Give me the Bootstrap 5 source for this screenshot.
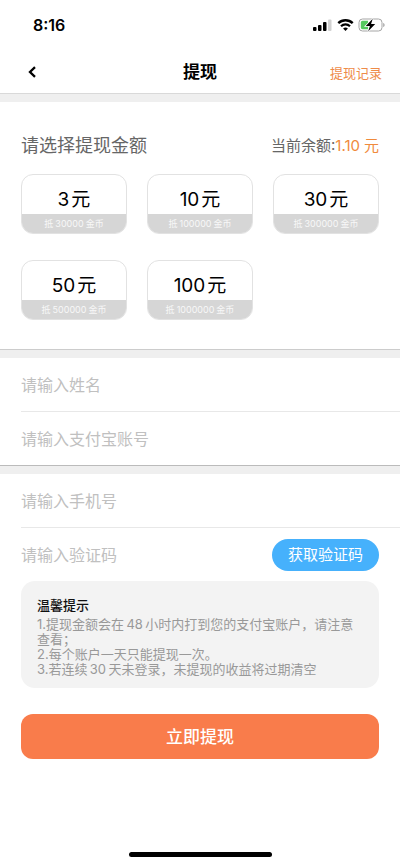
<!DOCTYPE html>
<html lang="zh-CN">
<head>
<meta charset="utf-8">
<meta name="viewport" content="width=device-width, initial-scale=1">
<title>提现</title>
<link href="https://cdn.jsdelivr.net/npm/bootstrap@5.3.0/dist/css/bootstrap.min.css" rel="stylesheet">
<style>
body { font-family: Inter, "Noto Sans CJK SC", sans-serif; color: #000; background: #fff; }
.side { padding-left: 21px; padding-right: 21px; }
.status-bar { height: 48px; padding: 2px 15px 0 33px; }
.clock { font-size: 16px; font-weight: 600; }
.top-nav { height: 46px; padding: 2px 18px 0; border-bottom: 1px solid #d9d9d9; }
.back { width: 28px; height: 24px; line-height: 1; }
.title { font-size: 17px; line-height: 24px; font-weight: 600; }
.record { font-size: 13px; color: #ee8b48; padding-top: 4px; }
.divider { height: 8px; background: #efefef; }
.choose { padding-top: 31px; padding-bottom: 29px; border-bottom: 1px solid #ccc; }
.choose-title { font-size: 18px; line-height: 26px; color: #666; }
.balance { font-size: 15px; line-height: 26px; color: #666; }
.balance-sum { color: #f08a3c; }
.amounts { --bs-gutter-x: 20px; --bs-gutter-y: 26px; padding-top: 15px; }
.amount { height: 60px; border: 1px solid #e2e2e2; border-radius: 12px; background: #fff; color: #000; }
.amount-sum { font-size: 19px; line-height: 24px; padding-top: 13px; gap: 2px; }
.amount-coins { font-size: 9px; line-height: 19px; background: #d6d6d6; color: #f8f8f8; gap: 2px; }
.field { height: 53px; margin-left: 21px; padding-right: 21px; }
.field + .field { height: 54px; border-top: 1px solid #e8e8e8; }
.field .form-control { font-size: 16px; line-height: 24px; border-radius: 0; }
.field .form-control::placeholder { color: #c0c0c0; opacity: 1; }
.group { border-bottom: 1px solid #bbb; }
.code-btn { width: 107px; height: 32px; font-size: 15px; line-height: 24px; background: #46b1fc; color: #fff; }
.tips { padding: 16px 16px 11px; border-radius: 14px; background: #f3f3f3; color: #999; font-size: 13px; line-height: 15px; }
.tips-title { font-size: 13px; line-height: 16px; font-weight: 500; color: #111; margin-bottom: 4px; }
.submit { height: 45px; margin-top: 26px; border-radius: 12px; background: #f97c4b; color: #fff; font-size: 17px; line-height: 24px; font-weight: 500; }
.home-bar { width: 143px; height: 5px; margin-bottom: 9px; background: #000; }
</style>
<script src="https://cdn.jsdelivr.net/npm/bootstrap@5.3.0/dist/js/bootstrap.bundle.min.js"></script>
</head>
<body>
<div class="d-flex flex-column min-vh-100">
  <header>
    <div class="status-bar d-flex align-items-center justify-content-between">
      <span class="clock">8:16</span>
      <div class="d-flex align-items-center gap-1">
        <svg width="20" height="14" viewBox="0 0 20 14" aria-hidden="true">
          <rect x="0" y="9" width="3.500" height="4" rx="1"/><rect x="5" y="7" width="3.500" height="6" rx="1"/><rect x="10" y="4" width="3.500" height="9" rx="1"/><rect x="15" y="1.500" width="3.500" height="11.500" rx="1" fill="#d2d2d2"/>
        </svg>
        <svg width="17" height="14" viewBox="0 0 17 14" fill="none" stroke="#000" aria-hidden="true">
          <path d="M1.300 5.200a10.300 10.300 0 0 1 14.400 0" stroke-width="2.400"/><path d="M4 8.300a6.400 6.400 0 0 1 9 0" stroke-width="2.200"/><path d="M8.500 13 6.100 10.600a3.500 3.500 0 0 1 4.800 0z" fill="#000" stroke="none"/>
        </svg>
        <svg width="27" height="14" viewBox="0 0 27 14" aria-hidden="true">
          <rect x="1" y="1" width="23" height="12" rx="3.500" fill="none" stroke="#a5a5a5"/><path d="M25.200 5v4c1-.3 1.400-1 1.400-2s-.4-1.700-1.400-2z" fill="#a5a5a5"/><path d="M4.500 2.800H10v8.400H4.500A1.700 1.700 0 0 1 2.800 9.500v-5A1.700 1.700 0 0 1 4.500 2.800z" fill="#55c95f"/><path d="M14.700.8 7.800 7.900h4.100l-1.700 5.400 7-7.200h-4.100z" stroke="#fff" stroke-width="1.600" paint-order="stroke"/>
        </svg>
      </div>
    </div>
    <nav class="top-nav row gx-0 align-items-center" aria-label="页面导航">
      <div class="col">
        <button type="button" class="back btn p-0 border-0 d-flex align-items-center justify-content-center" aria-label="返回">
          <svg width="10" height="12" viewBox="0 0 10 12" fill="none" stroke="#000" stroke-width="2.300"><path d="M8 1.200 3 6l5 4.800"/></svg>
        </button>
      </div>
      <h1 class="title col-auto mb-0">提现</h1>
      <div class="col text-end"><a href="#records" class="record d-inline-block text-decoration-none">提现记录</a></div>
    </nav>
  </header>
  <div class="divider"></div>

  <main>
    <section class="choose side">
      <div class="d-flex justify-content-between">
        <h2 class="choose-title fw-normal mb-0">请选择提现金额</h2>
        <div class="balance">当前余额:<span class="balance-sum">1.10<span class="ms-1">元</span></span></div>
      </div>
      <div class="amounts row row-cols-3">
        <div class="col"><button type="button" class="amount w-100 p-0 overflow-hidden d-flex flex-column justify-content-between">
          <span class="amount-sum d-flex justify-content-center w-100"><span>3</span><span>元</span></span>
          <span class="amount-coins d-flex justify-content-center w-100"><span>抵</span><span>30000</span><span>金币</span></span></button></div>
        <div class="col"><button type="button" class="amount w-100 p-0 overflow-hidden d-flex flex-column justify-content-between">
          <span class="amount-sum d-flex justify-content-center w-100"><span>10</span><span>元</span></span>
          <span class="amount-coins d-flex justify-content-center w-100"><span>抵</span><span>100000</span><span>金币</span></span></button></div>
        <div class="col"><button type="button" class="amount w-100 p-0 overflow-hidden d-flex flex-column justify-content-between">
          <span class="amount-sum d-flex justify-content-center w-100"><span>30</span><span>元</span></span>
          <span class="amount-coins d-flex justify-content-center w-100"><span>抵</span><span>300000</span><span>金币</span></span></button></div>
        <div class="col"><button type="button" class="amount w-100 p-0 overflow-hidden d-flex flex-column justify-content-between">
          <span class="amount-sum d-flex justify-content-center w-100"><span>50</span><span>元</span></span>
          <span class="amount-coins d-flex justify-content-center w-100"><span>抵</span><span>500000</span><span>金币</span></span></button></div>
        <div class="col"><button type="button" class="amount w-100 p-0 overflow-hidden d-flex flex-column justify-content-between">
          <span class="amount-sum d-flex justify-content-center w-100"><span>100</span><span>元</span></span>
          <span class="amount-coins d-flex justify-content-center w-100"><span>抵</span><span>1000000</span><span>金币</span></span></button></div>
      </div>
    </section>
    <div class="divider"></div>

    <form>
      <div class="group">
        <div class="field d-flex align-items-center"><input type="text" class="form-control border-0 p-0" placeholder="请输入姓名" aria-label="姓名"></div>
        <div class="field d-flex align-items-center"><input type="text" class="form-control border-0 p-0" placeholder="请输入支付宝账号" aria-label="支付宝账号"></div>
      </div>
      <div class="divider"></div>
      <div class="field d-flex align-items-center"><input type="tel" class="form-control border-0 p-0" placeholder="请输入手机号" aria-label="手机号"></div>
      <div class="field d-flex align-items-center">
        <input type="text" class="form-control border-0 p-0" placeholder="请输入验证码" aria-label="验证码">
        <button type="button" class="code-btn btn rounded-pill border-0 p-0 flex-shrink-0">获取验证码</button>
      </div>
      <div class="side">
        <div class="tips">
          <h2 class="tips-title">温馨提示</h2>
          <p class="mb-0">1.提现金额会在&thinsp;48&thinsp;小时内打到您的支付宝账户，请注意查看；</p>
          <p class="mb-0">2.每个账户一天只能提现一次。</p>
          <p class="mb-0">3.若连续&thinsp;30&thinsp;天未登录，未提现的收益将过期清空</p>
        </div>
        <button type="submit" class="submit btn border-0 w-100 p-0">立即提现</button>
      </div>
    </form>
  </main>
  <div class="home-bar rounded-pill mx-auto mt-auto"></div>
</div>
</body>
</html>
